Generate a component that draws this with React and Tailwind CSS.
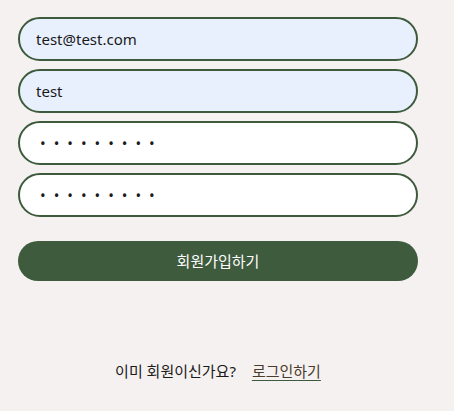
import { useState } from 'react';

export default function App() {
    const [email, setEmail] = useState('test@test.com');
    const [name, setName] = useState('test');
    const [pw, setPw] = useState('123456789');
    const [pw2, setPw2] = useState('123456789');

    const inputBase = "w-full h-[44px] rounded-full border-2 border-[#3d5a3c] px-[16px] text-[15px] text-[#1a1a1a] outline-none";

    return (
        <div className="min-h-[411px] bg-[#f5f1f0] px-[18px] pt-[17px]" style={{ fontFamily: '"Noto Sans", "Noto Sans CJK KR", sans-serif' }}>
            <form className="w-[400px] flex flex-col" onSubmit={e => e.preventDefault()}>
                <div className="flex flex-col gap-[8px]">
                    <input type="email" value={email} onChange={e => setEmail(e.target.value)} className={`${inputBase} bg-[#e8f0fe]`} />
                    <input type="text" value={name} onChange={e => setName(e.target.value)} className={`${inputBase} bg-[#e8f0fe]`} />
                    <input type="password" value={pw} onChange={e => setPw(e.target.value)} className={`${inputBase} bg-white tracking-[8px] pl-[20px]`} />
                    <input type="password" value={pw2} onChange={e => setPw2(e.target.value)} className={`${inputBase} bg-white tracking-[8px] pl-[20px]`} />
                </div>
                <button type="submit" className="mt-[24px] h-[40px] w-full rounded-full bg-[#3e5b3d] text-white text-[15px]">
                    회원가입하기
                </button>
            </form>

            {/* --- Login link --- */}
            <div className="w-[400px] mt-[79px] flex justify-center items-center gap-[16px] text-[15px] text-[#1a1a1a]">
                <span>이미 회원이신가요?</span>
                <a href="#" className="text-[#4a3b2a] underline decoration-[#3d5a3c] underline-offset-[3px]">로그인하기</a>
            </div>
        </div>
    );
}
